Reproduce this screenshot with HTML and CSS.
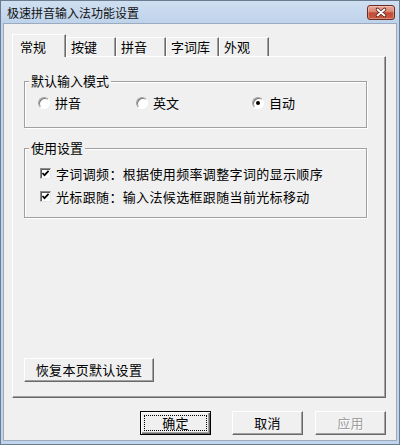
FILE: index.html
```html
<!DOCTYPE html>
<html lang="zh-CN">
<head>
<meta charset="utf-8">
<title>极速拼音输入法功能设置</title>
<link rel="stylesheet" href="styles.css">
</head>
<body>
<div class="window">
  <div class="titlebar">
    <span class="title">极速拼音输入法功能设置</span>
    <span class="close">
      <svg width="28" height="15" viewBox="0 0 28 15">
        <path d="M10.5 4.5 L17.5 10.5 M17.5 4.5 L10.5 10.5" stroke="#5b2218" stroke-width="3.6" stroke-linecap="round" fill="none"/>
        <path d="M10.5 4.5 L17.5 10.5 M17.5 4.5 L10.5 10.5" stroke="#ffffff" stroke-width="1.9" stroke-linecap="round" fill="none"/>
      </svg>
    </span>
  </div>
  <div class="client">
    <div class="tabs">
      <div class="tab active">常规</div>
      <div class="tab">按键</div>
      <div class="tab">拼音</div>
      <div class="tab wide">字词库</div>
      <div class="tab">外观</div>
    </div>
    <div class="panel">
      <fieldset class="group g1">
        <legend>默认输入模式</legend>
        <div class="radios">
          <label class="radio"><span class="rb"></span>拼音</label>
          <label class="radio"><span class="rb"></span>英文</label>
          <label class="radio"><span class="rb on"></span>自动</label>
        </div>
      </fieldset>
      <fieldset class="group g2">
        <legend>使用设置</legend>
        <label class="check"><span class="cb"><svg width="9" height="9" viewBox="0 0 9 9"><polyline points="1.5,4 3.5,6.2 7.6,1.8" fill="none" stroke="#000" stroke-width="1.7"/></svg></span>字词调频：根据使用频率调整字词的显示顺序</label>
        <label class="check"><span class="cb"><svg width="9" height="9" viewBox="0 0 9 9"><polyline points="1.5,4 3.5,6.2 7.6,1.8" fill="none" stroke="#000" stroke-width="1.7"/></svg></span>光标跟随：输入法候选框跟随当前光标移动</label>
      </fieldset>
      <button class="btn reset">恢复本页默认设置</button>
    </div>
    <div class="footer">
      <button class="btn ok">确定</button>
      <button class="btn cancel">取消</button>
      <button class="btn apply">应用</button>
    </div>
  </div>
</div>
</body>
</html>
```
FILE: styles.css
```css
* { box-sizing: border-box; }

body {
  margin: 0;
  font-family: "Noto Sans CJK SC", "Noto Sans", sans-serif;
  font-size: 13px;
  color: #000;
  background: #bfd3ea;
}

.window {
  width: 400px;
  height: 445px;
  border: 1px solid #6c7c90;
  background: #c0d4eb;
  display: flex;
  flex-direction: column;
}

.titlebar {
  height: 23px;
  display: flex;
  align-items: center;
  padding: 0 4px 0 6px;
  background: linear-gradient(#cfdff1, #bdd2ea);
}

.title {
  flex: 1;
  font-size: 12px;
  line-height: 14px;
  color: #111;
}

.close {
  width: 28px;
  height: 15px;
  display: block;
  border: 1px solid #6d2a20;
  border-radius: 3px;
  background: linear-gradient(#eaa899 0%, #d98470 45%, #c24a36 52%, #cd5b42 100%);
  box-shadow: inset 0 0 0 1px rgba(255, 255, 255, 0.3);
  overflow: hidden;
}

.close svg {
  display: block;
  margin: -1px 0 0 -1px;
}

.client {
  flex: 1;
  margin: 0 3px 4px;
  background: #f0f0f0;
  box-shadow: 0 0 0 1px #9aabc0;
  padding: 10px 10px 0 8px;
  display: flex;
  flex-direction: column;
}

.tabs {
  display: flex;
  align-items: flex-end;
  height: 22px;
}

.tab {
  height: 19px;
  width: 50px;
  padding-left: 4px;
  border-top: 1px solid #fff;
  border-left: 1px solid #fff;
  border-right: 1px solid #696969;
  box-shadow: inset -1px 0 #a0a0a0;
  line-height: 17px;
  white-space: nowrap;
}

.tab.wide { width: 53px; }

.tab.active {
  width: 54px;
  height: 23px;
  padding-left: 7px;
  padding-top: 3px;
  margin-bottom: -1px;
  background: #f0f0f0;
  position: relative;
  z-index: 1;
}

.panel {
  height: 342px;
  border: 1px solid;
  border-color: #fff #696969 #696969 #fff;
  box-shadow: inset -1px -1px #a0a0a0;
  padding: 16px 18px 15px 11px;
  display: flex;
  flex-direction: column;
}

.group {
  margin: 0;
  min-width: 0;
  border: 1px solid #a0a0a0;
  box-shadow: 1px 1px 0 #fff, inset 1px 1px 0 #fff;
  padding: 6px 0 16px 0;
}

.group legend {
  margin-left: 4px;
  padding: 0 2px;
  line-height: 16px;
  background: #f0f0f0;
}

.g2 {
  margin-top: 12px;
  padding: 6px 0 9px 0;
}

.radios {
  display: grid;
  grid-template-columns: 98px 116px auto;
  margin-left: 13px;
}

.radio {
  display: flex;
  align-items: center;
  gap: 5px;
  height: 16px;
  line-height: 16px;
}

.rb {
  width: 12px;
  height: 12px;
  border-radius: 50%;
  border: 1px solid;
  border-color: #a0a0a0 #fff #fff #a0a0a0;
  background: #fff;
  box-shadow: inset 1px 1px #7a7a7a;
  position: relative;
  flex: none;
}

.rb.on::after {
  content: "";
  position: absolute;
  left: 3px;
  top: 3px;
  width: 4px;
  height: 4px;
  border-radius: 50%;
  background: #000;
}

.check {
  display: flex;
  align-items: center;
  gap: 5px;
  height: 23px;
  margin-left: 15px;
  letter-spacing: 0.35px;
  white-space: nowrap;
}

.cb {
  width: 11px;
  height: 11px;
  flex: none;
  border: 1px solid;
  border-color: #8c8c8c #e6e6e6 #e6e6e6 #8c8c8c;
  background: #fff;
  box-shadow: inset 1px 1px #5a5a5a;
}

.cb svg {
  display: block;
}

.btn {
  font: inherit;
  font-size: 13px;
  color: #000;
  background: #f0f0f0;
  border: 1px solid;
  border-color: #fff #696969 #696969 #fff;
  box-shadow: inset -1px -1px #a0a0a0;
  padding: 0;
  height: 24px;
  line-height: 20px;
  letter-spacing: 0.3px;
}

.reset {
  width: 130px;
  margin-top: auto;
  align-self: flex-start;
}

.footer {
  display: flex;
  justify-content: flex-end;
  margin-top: 13px;
}

.ok {
  width: 71px;
  margin-right: 21px;
  border: 1px solid #000;
  box-shadow: inset 1px 1px #fff, inset -1px -1px #696969, inset -2px -2px #a0a0a0;
  outline: 1px dotted #000;
  outline-offset: -5px;
}

.cancel {
  width: 71px;
  margin-right: 12px;
}

.apply {
  width: 71px;
  color: #a0a0a0;
  text-shadow: 1px 1px #fff;
}
```
